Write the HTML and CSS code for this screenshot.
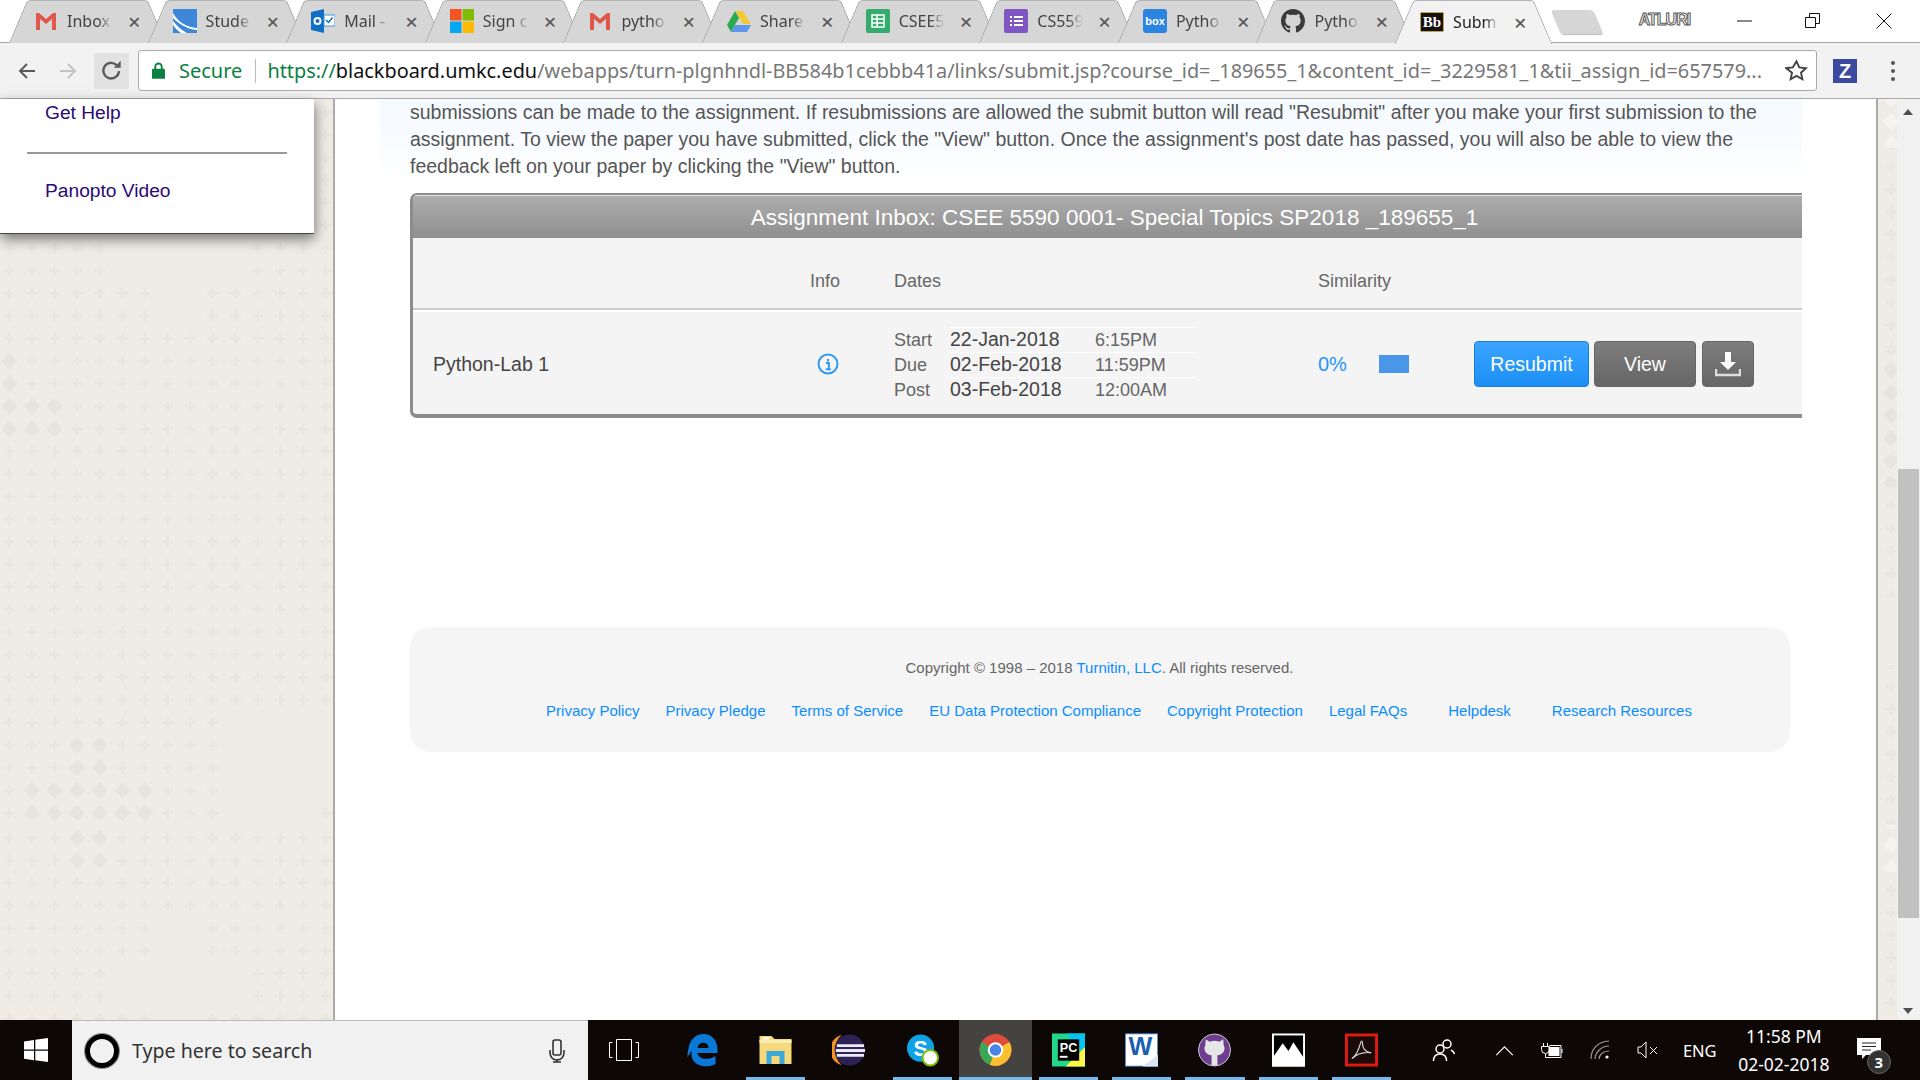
FILE: index.html
```html
<!DOCTYPE html>
<html lang="en">
<head>
  <meta charset="UTF-8">
  <title>Submit</title>
  <link rel="stylesheet" href="styles.css">
</head>
<body>
  <!-- Browser tabs -->
  <div class="tabstrip">
    <div class="tab">
      <svg class="favicon" viewBox="0 0 24 24"><path d="M2 4h3l7 6 7-6h3v17h-4V10l-6 5-6-5v11H2z" fill="#e0584c"/></svg>
      <span class="tab-title">Inbox</span><span class="tab-close">&times;</span>
    </div>
    <div class="tab">
      <svg class="favicon" viewBox="0 0 24 24"><rect x="0" y="0" width="24" height="24" fill="#3d86d8"/><path d="M0 4c5 9 13 14 24 15v2C13 20 5 14 0 9zM0 12c4 5 8 9 14 12H8C5 22 2 19 0 16z" fill="#fff"/></svg>
      <span class="tab-title">Stude</span><span class="tab-close">&times;</span>
    </div>
    <div class="tab">
      <svg class="favicon" viewBox="0 0 24 24"><path d="M0 3l13-3v24L0 21z" fill="#0f6fc6"/><rect x="13" y="6" width="11" height="11" fill="#fff" stroke="#3d97dc"/><circle cx="6.5" cy="12" r="3" fill="none" stroke="#fff" stroke-width="2"/><path d="M15 11l2.5 2.5 4-5" fill="none" stroke="#0f6fc6" stroke-width="1.5"/></svg>
      <span class="tab-title">Mail -</span><span class="tab-close">&times;</span>
    </div>
    <div class="tab">
      <svg class="favicon" viewBox="0 0 24 24"><rect width="11.5" height="11.5" fill="#f35325"/><rect x="12.5" width="11.5" height="11.5" fill="#81bc06"/><rect y="12.5" width="11.5" height="11.5" fill="#05a6f0"/><rect x="12.5" y="12.5" width="11.5" height="11.5" fill="#ffba08"/></svg>
      <span class="tab-title">Sign c</span><span class="tab-close">&times;</span>
    </div>
    <div class="tab">
      <svg class="favicon" viewBox="0 0 24 24"><path d="M2 4h3l7 6 7-6h3v17h-4V10l-6 5-6-5v11H2z" fill="#e0584c"/></svg>
      <span class="tab-title">pytho</span><span class="tab-close">&times;</span>
    </div>
    <div class="tab">
      <svg class="favicon" viewBox="0 0 24 24"><path d="M8 2h8l8 13h-8z" fill="#f5c836"/><path d="M8 2l4 7-8 14-4-7z" fill="#2da94f"/><path d="M8 16h16l-4 7H4z" fill="#5c97ec"/></svg>
      <span class="tab-title">Share</span><span class="tab-close">&times;</span>
    </div>
    <div class="tab">
      <svg class="favicon" viewBox="0 0 24 24"><rect width="24" height="24" rx="2" fill="#35ab6f"/><path d="M6 6h12v12H6zM6 10h12M6 14h12M11 6v12" fill="none" stroke="#fff" stroke-width="1.5"/></svg>
      <span class="tab-title">CSEE5</span><span class="tab-close">&times;</span>
    </div>
    <div class="tab">
      <svg class="favicon" viewBox="0 0 24 24"><rect width="24" height="24" rx="2" fill="#7e57c2"/><path d="M6 7h2v2H6zM10 7h9v2h-9zM6 11h2v2H6zM10 11h9v2h-9zM6 15h2v2H6zM10 15h9v2h-9z" fill="#fff"/></svg>
      <span class="tab-title">CS559</span><span class="tab-close">&times;</span>
    </div>
    <div class="tab">
      <svg class="favicon" viewBox="0 0 24 24"><rect width="24" height="24" rx="3" fill="#2b84e0"/><text x="12" y="16" class="box-text">box</text></svg>
      <span class="tab-title">Pytho</span><span class="tab-close">&times;</span>
    </div>
    <div class="tab">
      <svg class="favicon" viewBox="0 0 16 16"><path fill="#3b3b3b" d="M8 0C3.58 0 0 3.58 0 8c0 3.54 2.29 6.53 5.47 7.59.4.07.55-.17.55-.38 0-.19-.01-.82-.01-1.49-2.01.37-2.53-.49-2.69-.94-.09-.23-.48-.94-.82-1.13-.28-.15-.68-.52-.01-.53.63-.01 1.08.58 1.23.82.72 1.21 1.87.87 2.33.66.07-.52.28-.87.51-1.07-1.78-.2-3.64-.89-3.64-3.95 0-.87.31-1.59.82-2.15-.08-.2-.36-1.02.08-2.12 0 0 .67-.21 2.2.82.64-.18 1.32-.27 2-.27.68 0 1.36.09 2 .27 1.53-1.04 2.2-.82 2.2-.82.44 1.1.16 1.92.08 2.12.51.56.82 1.27.82 2.15 0 3.07-1.87 3.75-3.65 3.95.29.25.54.73.54 1.48 0 1.07-.01 1.93-.01 2.2 0 .21.15.46.55.38A8.013 8.013 0 0016 8c0-4.42-3.58-8-8-8z"/></svg>
      <span class="tab-title">Pytho</span><span class="tab-close">&times;</span>
    </div>
    <div class="tab tab-active">
      <svg class="favicon" viewBox="0 0 24 24"><rect x="0.5" y="2.5" width="23" height="19" rx="1" fill="#111" stroke="#c8a24a"/><text x="12" y="17" class="bb-text">Bb</text></svg>
      <span class="tab-title">Subm</span><span class="tab-close">&times;</span>
    </div>
    <div class="newtab"></div>
    <div class="window-controls">
      <span class="profile-name">ATLURI</span>
      <svg class="win-btn win-min" viewBox="0 0 16 16"><path d="M0 8h15" stroke="#111" fill="none"/></svg>
      <svg class="win-btn win-max" viewBox="0 0 16 16"><path d="M.5 4.5h10v10H.5zM4.5 4.5v-4h10v10h-4" stroke="#111" fill="none"/></svg>
      <svg class="win-btn win-close" viewBox="0 0 16 16"><path d="M.5.5l15 15M15.5.5l-15 15" stroke="#111" fill="none"/></svg>
    </div>
  </div>

  <!-- Address bar -->
  <div class="toolbar">
    <svg class="nav-icon nav-back" viewBox="0 0 20 20"><path d="M18 10H3M10 3l-7 7 7 7" fill="none" stroke="#5a5a5a" stroke-width="2"/></svg>
    <svg class="nav-icon nav-forward" viewBox="0 0 20 20"><path d="M2 10h15M10 3l7 7-7 7" fill="none" stroke="#c4c4c4" stroke-width="2"/></svg>
    <div class="reload">
      <svg class="reload-icon" viewBox="0 0 20 20"><path d="M16.5 10.5a6.8 6.8 0 1 1-2-5.2" fill="none" stroke="#5a5a5a" stroke-width="2"/><path d="M12 7.5h6v-6z" fill="#5a5a5a"/></svg>
    </div>
    <div class="omnibox">
      <svg class="lock" viewBox="0 0 14 18"><path d="M3.5 8V5a3.5 3.5 0 0 1 7 0v3" fill="none" stroke="#0b8043" stroke-width="2"/><rect y="7" width="14" height="11" rx="1" fill="#0b8043"/></svg>
      <span class="secure">Secure</span>
      <span class="omni-sep"></span>
      <span class="url"><span class="url-scheme">https://</span><span class="url-host">blackboard.umkc.edu</span>/webapps/turn-plgnhndl-BB584b1cebbb41a/links/submit.jsp?course_id=_189655_1&amp;content_id=_3229581_1&amp;tii_assign_id=657579...</span>
      <svg class="star" viewBox="0 0 24 24"><path d="M12 2.5l2.9 6.3 6.9.8-5.1 4.7 1.4 6.8-6.1-3.4-6.1 3.4 1.4-6.8L1.200 9.600l6.900-.8z" fill="none" stroke="#444" stroke-width="2"/></svg>
    </div>
    <span class="ext-z">Z</span>
    <span class="menu-dots"><i></i><i></i><i></i></span>
  </div>

  <div class="page">
    <div class="side">
      <svg class="pattern" viewBox="0 99 333 921">
        <defs>
          <pattern id="pa" x="-2" y="236.700" width="22.600" height="22.600" patternUnits="userSpaceOnUse">
            <path class="plus" d="M9.800 6h3v3.800h3.800v3h-3.800v3.800h-3v-3.800H6v-3h3.800z"/>
          </pattern>
          <pattern id="pb" x="-2" y="826.700" width="22.600" height="22.600" patternUnits="userSpaceOnUse">
            <path class="plus" d="M9.800 6h3v3.800h3.800v3h-3.800v3.800h-3v-3.800H6v-3h3.800z"/>
          </pattern>
          <pattern id="da" x="-2" y="236.700" width="22.600" height="22.600" patternUnits="userSpaceOnUse">
            <path class="dia" d="M11.300 3l8.300 8.300-8.300 8.300L3 11.300z"/>
          </pattern>
          <pattern id="db" x="-2" y="826.700" width="22.600" height="22.600" patternUnits="userSpaceOnUse">
            <path class="dia" d="M11.300 3l8.300 8.300-8.300 8.300L3 11.300z"/>
          </pattern>
        </defs>
        <rect x="0" y="99" width="333" height="728" fill="url(#pa)"/>
        <rect x="0" y="827" width="333" height="193" fill="url(#pb)"/>
        <!-- gaps in the wallpaper -->
        <g class="gap">
          <rect x="110" y="237" width="136" height="46"/>
          <rect x="155" y="283" width="46" height="45"/>
          <rect x="223" y="710" width="110" height="90"/>
          <rect x="223" y="800" width="90" height="22"/>
          <rect x="155" y="916" width="46" height="45"/>
          <rect x="110" y="961" width="136" height="46"/>
          <rect x="155" y="1007" width="46" height="13"/>
        </g>
        <rect x="66" y="733" width="45" height="45" fill="url(#da)"/>
        <rect x="21" y="778" width="135" height="45" fill="url(#da)"/>
        <rect x="66" y="827" width="45" height="45" fill="url(#db)"/>
        <rect x="0" y="350" width="21" height="45" fill="url(#da)"/>
        <rect x="0" y="395" width="66" height="45" fill="url(#da)"/>
      </svg>
      <nav class="menu">
        <a class="menu-link" href="#">Get Help</a>
        <hr class="menu-rule">
        <a class="menu-link" href="#">Panopto Video</a>
      </nav>
    </div>

    <main class="main">
      <p class="notice">submissions can be made to the assignment. If resubmissions are allowed the submit button will read "Resubmit" after you make your first submission to the assignment. To view the paper you have submitted, click the "View" button. Once the assignment's post date has passed, you will also be able to view the feedback left on your paper by clicking the "View" button.</p>

      <section class="card">
        <h2 class="card-title">Assignment Inbox: CSEE 5590 0001- Special Topics SP2018 _189655_1</h2>
        <div class="grid col-heads">
          <span></span>
          <span>Info</span>
          <span>Dates</span>
          <span>Similarity</span>
          <span></span>
        </div>
        <div class="grid paper-row">
          <span class="paper-name">Python-Lab 1</span>
          <svg class="info-icon" viewBox="0 0 22 22"><circle cx="11" cy="11" r="9.500" fill="none" stroke="#2e9bf0" stroke-width="2"/><path d="M11 6v2.400M9 10h2.800v6M8.800 16.200h5" fill="none" stroke="#2e9bf0" stroke-width="2"/></svg>
          <div class="dates">
            <span class="date-label">Start</span><span class="date-val">22-Jan-2018</span><span class="date-time">6:15PM</span>
            <span class="date-label">Due</span><span class="date-val">02-Feb-2018</span><span class="date-time">11:59PM</span>
            <span class="date-label">Post</span><span class="date-val">03-Feb-2018</span><span class="date-time">12:00AM</span>
          </div>
          <div class="similarity"><span class="sim-score">0%</span><span class="sim-bar"></span></div>
          <div class="actions">
            <button class="btn btn-blue">Resubmit</button>
            <button class="btn btn-gray btn-view">View</button>
            <button class="btn btn-gray btn-dl">
              <svg viewBox="0 0 26 26" class="dl-icon"><path d="M10 1h6v10h5l-8 8-8-8h5z" fill="#fff"/><path d="M1 18v6h24v-6" fill="none" stroke="#ddd" stroke-width="2.500"/></svg>
            </button>
          </div>
        </div>
      </section>

      <footer class="foot">
        <p class="copyright">Copyright &copy; 1998 &ndash; 2018 <a href="#">Turnitin, LLC</a>. All rights reserved.</p>
        <div class="foot-links">
          <a href="#">Privacy Policy</a>
          <a href="#">Privacy Pledge</a>
          <a href="#">Terms of Service</a>
          <a href="#">EU Data Protection Compliance</a>
          <a href="#">Copyright Protection</a>
          <a href="#">Legal FAQs</a>
          <a class="foot-helpdesk" href="#">Helpdesk</a>
          <a href="#">Research Resources</a>
        </div>
      </footer>
    </main>

    <div class="strip">
      <svg class="pattern" viewBox="0 99 19 921">
        <defs>
          <pattern id="sa" x="1.700" y="-2.700" width="22.600" height="22.600" patternUnits="userSpaceOnUse">
            <path class="plus" d="M9.800 6h3v3.800h3.800v3h-3.800v3.800h-3v-3.800H6v-3h3.800z"/>
          </pattern>
          <pattern id="sd" x="1.700" y="-2.700" width="22.600" height="22.600" patternUnits="userSpaceOnUse">
            <path class="dia" d="M11.300 3l8.300 8.300-8.300 8.300L3 11.300z"/>
          </pattern>
          <pattern id="sl" x="1.700" y="-2.700" width="22.600" height="22.600" patternUnits="userSpaceOnUse">
            <path class="dia-light" d="M11.300 3l8.300 8.300-8.300 8.300L3 11.300z"/>
          </pattern>
        </defs>
        <rect y="148" width="19" height="200" fill="url(#sa)"/>
        <rect y="350" width="19" height="137" fill="url(#sd)"/>
        <rect y="487" width="19" height="110" fill="url(#sa)"/>
        <rect y="665" width="19" height="160" fill="url(#sa)"/>
        <rect y="99" width="19" height="49" fill="url(#sl)"/>
        <rect y="825" width="19" height="47" fill="url(#sl)"/>
        <rect y="872" width="19" height="148" fill="url(#sa)"/>
      </svg>
    </div>

    <div class="scrollbar">
      <span class="arrow-up"></span>
      <span class="thumb"></span>
      <span class="arrow-down"></span>
    </div>
  </div>

  <!-- Windows taskbar -->
  <div class="taskbar">
    <div class="start">
      <svg viewBox="0 0 24 24" class="start-logo"><path d="M0 3.400l10-1.400v9.500H0zM11.300 1.800L24 0v11.500H11.300zM0 12.800h10v9.400L0 20.800zM11.300 12.800H24V24l-12.700-1.800z" fill="#fff"/></svg>
    </div>
    <div class="search">
      <span class="cortana"></span>
      <span class="search-text">Type here to search</span>
      <svg class="mic" viewBox="0 0 16 24"><rect x="4" y="1" width="8" height="15" rx="2" fill="none" stroke="#333" stroke-width="1.600"/><path d="M1 11v3a7 7 0 0 0 14 0v-3M8 20v3M4 23h8" fill="none" stroke="#333" stroke-width="1.600"/></svg>
    </div>
    <svg class="taskview" viewBox="0 0 30 22"><path d="M7.500.5h15v21h-15zM3.500 3.500h-3v15h3M26.500 3.500h3v15h-3" fill="none" stroke="#fff"/></svg>

    <div class="apps">
      <div class="app">
        <svg viewBox="0 0 32 34"><path d="M2 16C3 7 9 1 17 1c8 0 14 6 14 16v3H11c1 6 10 8 18 3v8c-10 5-24 2-24-10 0-1 0-2 .5-3C4 19 3 21 1 24c0-3 0-5 1-8zm9-1h11c0-7-10-7-11 0z" fill="#0a78d7"/></svg>
      </div>
      <div class="app app-open">
        <svg viewBox="0 0 32 34"><path d="M0 3h12l3 3h17v25H0z" fill="#f5d97a"/><rect y="7" width="32" height="3" fill="#fbeeb5"/><rect x="3" y="4.500" width="7" height="2" fill="#fff"/><path d="M7 31V18h18v13h-5v-8h-8v8z" fill="#3ba9dc"/></svg>
      </div>
      <div class="app">
        <svg viewBox="0 0 34 34"><circle cx="18" cy="17" r="16" fill="#2c2255"/><path d="M10 1.500A16 16 0 0 0 10 32.500 20 20 0 0 1 10 1.500z" fill="#f7941e"/><path d="M5 11h28v3H5zM4 16h30v3H4zM5 21h28v3H5z" fill="#ece9f5"/></svg>
      </div>
      <div class="app app-open">
        <svg viewBox="0 0 34 34"><circle cx="15" cy="15" r="14" fill="#0fa3e6"/><text x="15" y="23" class="skype-text">S</text><circle cx="25" cy="25" r="8" fill="#fff" stroke="#7fba00" stroke-width="2"/></svg>
      </div>
      <div class="app app-active">
        <svg viewBox="0 0 34 34"><circle cx="17" cy="17" r="16.500" fill="#dd4b3e"/><path d="M17 17L31.300 8.800A16.500 16.500 0 0 1 11 32.300z" fill="#fbc02d"/><path d="M17 17l-6 15.300A16.500 16.500 0 0 1 2.800 8.800z" fill="#3aa757"/><circle cx="17" cy="17" r="8" fill="#fff"/><circle cx="17" cy="17" r="6" fill="#4a86e8"/></svg>
      </div>
      <div class="app app-open">
        <svg viewBox="0 0 34 34"><rect width="34" height="34" fill="#21d789"/><path d="M14 0h20v20z" fill="#07c3f2"/><path d="M34 14v20H14z" fill="#fcf84a"/><rect x="6" y="6" width="22" height="22" fill="#000"/><text x="8" y="19" class="pc-text">PC</text><rect x="8" y="23" width="8" height="2" fill="#fff"/></svg>
      </div>
      <div class="app app-open">
        <svg viewBox="0 0 34 34"><rect width="34" height="34" fill="#fff" stroke="#2f5ea8" stroke-width="1.500"/><path d="M18 34l16-12v12z" fill="#dbe6f5"/><text x="16" y="22" class="word-text">W</text></svg>
      </div>
      <div class="app app-open">
        <svg viewBox="0 0 34 34"><ellipse cx="17" cy="17" rx="16.500" ry="16.500" fill="#6e3d92" stroke="#cfcfcf"/><path d="M8 6l4 2.500a12 12 0 0 1 10 0L26 6l.5 6c2.500 5-1 10-6.500 10.500V33h-6V22.500C8.500 22 5 17 7.500 12z" fill="#e6e6e6"/></svg>
      </div>
      <div class="app app-open">
        <svg viewBox="0 0 34 34"><rect x="1" y="1" width="32" height="32" fill="#000" stroke="#fff" stroke-width="2"/><path d="M0 26l11-16 6 8 5-9 12 18v7H0z" fill="#fff"/></svg>
      </div>
      <div class="app app-open">
        <svg viewBox="0 0 34 34"><rect x="1.500" y="1.500" width="31" height="31" fill="#1c0a08" stroke="#e01a10" stroke-width="3"/><path d="M8 25c3-2 6-8 8-15 .5-3 2-3 2 0 0 5 3 9 9 10-4-1-12 0-16 3s-4 3-3 2z" fill="none" stroke="#d9d9d9" stroke-width="1.200"/></svg>
      </div>
    </div>

    <div class="tray">
      <svg class="tray-people" viewBox="0 0 24 24"><circle cx="15" cy="6" r="4" fill="none" stroke="#fff" stroke-width="1.500"/><path d="M19 12c2 1 3 2 3.500 4" fill="none" stroke="#fff" stroke-width="1.500"/><circle cx="8" cy="11" r="4" fill="none" stroke="#fff" stroke-width="1.500"/><path d="M1.500 23c0-4 2-7 6.500-7s6.500 3 6.500 7" fill="none" stroke="#fff" stroke-width="1.500"/></svg>
      <svg class="tray-caret" viewBox="0 0 20 12"><path d="M1 11l9-9 9 9" fill="none" stroke="#fff" stroke-width="1.200"/></svg>
      <svg class="tray-battery" viewBox="0 0 24 16"><path d="M5 4.500V1M9 4.500V1M3 4.500h8v3a4 4 0 0 1-8 0z" fill="none" stroke="#fff"/><path d="M7 12v3.500h15.500v-12H11" fill="none" stroke="#fff"/><rect x="10" y="5" width="11" height="9" fill="#fff"/><rect x="23" y="7" width="1" height="4" fill="#fff"/></svg>
      <svg class="tray-wifi" viewBox="0 0 20 20"><path d="M1 19C1 9 8 1.500 19 1M5 19c0-6 6-13 14-13M9 19c0-4 4-8 10-8" fill="none" stroke="#999" stroke-width="1.200"/><circle cx="17" cy="17" r="1.600" fill="#fff"/></svg>
      <svg class="tray-volume" viewBox="0 0 22 20"><path d="M1 7h3l5-5v16l-5-5H1z" fill="none" stroke="#fff"/><path d="M13 7l7 7M20 7l-7 7" stroke="#fff" fill="none"/></svg>
      <span class="tray-lang">ENG</span>
      <div class="clock"><span>11:58 PM</span><span>02-02-2018</span></div>
      <div class="notify">
        <svg viewBox="0 0 26 24" class="notify-icon"><path d="M0 0h24v17H9l-4 4v-4H0z" fill="#fff"/><path d="M5 5h14M5 8.500h14M5 12h9" stroke="#222" fill="none"/></svg>
        <span class="notify-badge">3</span>
      </div>
    </div>
  </div>
</body>
</html>
```
FILE: styles.css
```css
* {
  margin: 0;
  padding: 0;
  box-sizing: border-box;
}

body {
  width: 1920px;
  height: 1080px;
  overflow: hidden;
  display: flex;
  flex-direction: column;
  background-color: #fff;
  font-family: "Liberation Sans", Arial, sans-serif;
  color: #555;
}

a {
  text-decoration: none;
}

/* Tabs */
.tabstrip {
  height: 43px;
  flex: none;
  display: flex;
  position: relative;
  padding-left: 9px;
  background-color: #fff;
  border-bottom: 1px solid #a9a9a9;
  font-family: "Noto Sans", sans-serif;
}

.tab {
  width: 157px;
  height: 42px;
  flex: none;
  margin-right: -18.400px;
  position: relative;
  display: flex;
  align-items: center;
  padding-left: 25px;
}

.tab::before,
.tab::after {
  content: "";
  position: absolute;
  top: 0;
  height: 42px;
  width: 90px;
  background-color: #d6d6d6;
  border-top: 1px solid #b4b4b4;
  z-index: 0;
}

.tab::before {
  left: 9px;
  transform: skewX(-23deg);
  border-left: 1px solid #a0a0a0;
  border-radius: 4px 0 0 0;
}

.tab::after {
  right: 9px;
  transform: skewX(23deg);
  border-right: 1px solid #a0a0a0;
  border-radius: 0 4px 0 0;
}

.tab-active {
  z-index: 3;
  height: 43px;
}

.tab-active::before,
.tab-active::after {
  background-color: #f2f2f2;
  height: 43px;
}

.favicon {
  width: 24px;
  height: 24px;
  flex: none;
  position: relative;
  z-index: 1;
}

.tab-title {
  width: 52px;
  margin-left: 9px;
  position: relative;
  z-index: 1;
  white-space: nowrap;
  font-size: 16px;
  color: #444;
  -webkit-mask-image: linear-gradient(to right, #000 60%, transparent 88%);
  mask-image: linear-gradient(to right, #000 60%, transparent 88%);
}

.tab-active .tab-title {
  color: #222;
}

.tab-close {
  margin-left: 9px;
  position: relative;
  z-index: 1;
  font-size: 22px;
  line-height: 1;
  font-weight: 500;
  color: #5a5a5a;
}

.box-text {
  font-family: "Liberation Sans", sans-serif;
  font-size: 11px;
  font-weight: bold;
  fill: #fff;
  text-anchor: middle;
}

.bb-text {
  font-family: "Liberation Serif", serif;
  font-size: 15px;
  font-weight: bold;
  fill: #fff;
  text-anchor: middle;
}

.newtab {
  width: 42px;
  height: 24px;
  margin: 10px 0 0 22px;
  background-color: #d6d6d6;
  border-radius: 3px;
  transform: skewX(23deg);
  box-shadow: 0 1px 1px #bbb;
  flex: none;
}

.window-controls {
  flex: 1;
  display: flex;
  align-items: center;
  height: 42px;
}

.profile-name {
  margin: -3px 0 0 41px;
  font-family: "Liberation Sans", sans-serif;
  font-size: 16px;
  font-weight: bold;
  letter-spacing: -1px;
  color: #fff;
  -webkit-text-stroke: 1px #555;
}

.win-btn {
  width: 16px;
  height: 16px;
  flex: none;
}

.win-min {
  margin-left: 47px;
}

.win-max {
  margin-left: 52px;
}

.win-close {
  margin-left: 55px;
}

/* Address bar */
.toolbar {
  height: 56px;
  flex: none;
  display: flex;
  align-items: center;
  background-color: #f2f2f2;
  border-bottom: 1px solid #aaa;
  padding-left: 17px;
}

.nav-icon {
  width: 20px;
  height: 20px;
  flex: none;
}

.nav-forward {
  margin-left: 21px;
}

.reload {
  width: 35px;
  height: 36px;
  margin-left: 16px;
  display: flex;
  align-items: center;
  justify-content: center;
  background-color: #e2e2e2;
  border-radius: 2px;
}

.reload-icon {
  width: 23px;
  height: 23px;
}

.omnibox {
  width: 1679px;
  height: 41px;
  margin-left: 9px;
  display: flex;
  align-items: center;
  background-color: #fff;
  border: 1px solid #aaa;
  border-radius: 3px;
  font-family: "Noto Sans", sans-serif;
  font-size: 20px;
  white-space: nowrap;
  padding-left: 13px;
}

.lock {
  width: 13px;
  height: 17px;
  flex: none;
}

.secure {
  margin-left: 14px;
  color: #0b8043;
}

.omni-sep {
  width: 1px;
  height: 24px;
  margin: 0 11px 0 13px;
  background-color: #bbb;
}

.url {
  flex: 1;
  color: #777;
  font-size: 19.880px;
  overflow: hidden;
}

.url-scheme {
  color: #0b8043;
}

.url-host {
  color: #111;
}

.star {
  width: 23px;
  height: 23px;
  flex: none;
  margin-right: 8px;
}

.ext-z {
  width: 24px;
  height: 24px;
  margin-left: 16px;
  flex: none;
  background-color: #3b4a9f;
  color: #fff;
  font-weight: bold;
  font-size: 20px;
  line-height: 24px;
  text-align: center;
}

.menu-dots {
  margin-left: 34px;
  display: flex;
  flex-direction: column;
  gap: 4px;
}

.menu-dots i {
  width: 4px;
  height: 4px;
  border-radius: 50%;
  background-color: #555;
}

/* Page area */
.page {
  flex: 1;
  display: flex;
  min-height: 0;
}

.side {
  width: 335px;
  flex: none;
  position: relative;
  background-color: #efece5;
  border-right: 2px solid #aaa;
}

.pattern {
  position: absolute;
  top: 0;
  left: 0;
  width: 100%;
  height: 100%;
}

.plus {
  fill: #e8e6de;
}

.dia {
  fill: #e6e4db;
}

.dia-light {
  fill: #f5f3ee;
}

.gap rect {
  fill: #efece5;
}

.menu {
  width: 314px;
  height: 135px;
  position: relative;
  background-color: #fff;
  border-bottom: 1px solid #444;
  box-shadow: 1px 5px 12px rgba(0, 0, 0, 0.5);
  padding-left: 27px;
}

.menu-link {
  display: block;
  margin-left: 18px;
  font-size: 19.200px;
  line-height: 28px;
  color: #2b0a73;
}

.menu-rule {
  width: 260px;
  height: 2px;
  margin: 25px 0 23px;
  border: 0;
  background-color: #999;
}

.main {
  flex: 1;
  min-width: 0;
  background-color: #fff;
  overflow: hidden;
}

.notice {
  width: 1422px;
  margin-left: 45px;
  padding: 0 12px 0 30px;
  font-size: 19.500px;
  line-height: 27px;
  color: #555;
  background: linear-gradient(to bottom, #f5faff 0%, #f8fbff 50%, #fff 100%);
}

/* Assignment card */
.card {
  width: 1392px;
  margin: 13px 0 0 75px;
  background-color: #f4f4f4;
  border: 2px solid #8c8c8c;
  border-width: 2px 0 4px 3px;
  border-radius: 7px 0 0 7px;
  overflow: hidden;
}

.card-title {
  height: 43px;
  padding-left: 14px;
  background: linear-gradient(to bottom, #adadad, #8f8f8f);
  border-top: 1px solid #e6e6e6;
  color: #fff;
  font-size: 22.500px;
  font-weight: normal;
  line-height: 44px;
  text-align: center;
}

.grid {
  display: grid;
  grid-template-columns: 377px 84px 424px 156px 1fr;
  padding-left: 20px;
  align-items: center;
}

.col-heads {
  height: 72px;
  padding-top: 16px;
  border-bottom: 2px solid #ccc;
  font-size: 18px;
  color: #666;
}

.paper-row {
  height: 104px;
  padding-top: 2px;
  border-top: 2px solid #fff;
}

.paper-name {
  font-size: 19.500px;
  color: #444;
}

.info-icon {
  width: 22px;
  height: 22px;
  margin-left: 7px;
}

.dates {
  display: grid;
  grid-template-columns: 56px 145px 100px;
  grid-auto-rows: 25px;
  width: 301px;
  font-size: 18px;
  line-height: 24px;
}

.date-label {
  padding-top: 1px;
  color: #666;
}

.date-val {
  font-size: 19.500px;
  line-height: 22px;
  color: #444;
  border-top: 1px solid #fff;
}

.date-time {
  color: #666;
  border-top: 1px solid #fff;
}

.similarity {
  display: flex;
  align-items: center;
}

.sim-score {
  width: 61px;
  font-size: 20px;
  color: #1e96ff;
}

.sim-bar {
  width: 30px;
  height: 18px;
  background-color: #4a97ea;
}

.actions {
  display: flex;
  gap: 5px;
}

.btn {
  height: 46px;
  border: 1px solid #666;
  border-radius: 4px;
  color: #fff;
  font-family: inherit;
  font-size: 19.500px;
}

.btn-blue {
  width: 115px;
  border-color: #1b7fd1;
  background: linear-gradient(to bottom, #3ba5ff, #1c8ef5);
}

.btn-gray {
  background: linear-gradient(to bottom, #7d7d7d, #666);
}

.btn-view {
  width: 102px;
}

.btn-dl {
  width: 52px;
  margin-left: 1px;
  display: flex;
  align-items: center;
  justify-content: center;
}

.dl-icon {
  width: 26px;
  height: 26px;
}

/* Footer */
.foot {
  width: 1380px;
  height: 125px;
  margin: 209px 0 0 75px;
  background-color: #f5f5f5;
  border-radius: 20px;
  font-size: 15px;
  text-align: center;
  color: #666;
  padding-top: 32px;
}

.foot a {
  color: #0a8dff;
}

.copyright {
  line-height: 18px;
  margin-left: -1px;
}

.foot-links {
  display: flex;
  justify-content: center;
  gap: 26px;
  margin-top: 25px;
  padding-left: 38px;
  line-height: 18px;
}

.foot-helpdesk {
  margin: 0 15px;
}

.strip {
  width: 21px;
  flex: none;
  position: relative;
  background-color: #efece5;
  border-left: 2px solid #aaa;
}

.scrollbar {
  width: 23px;
  flex: none;
  position: relative;
  background-color: #f1f1f1;
}

.arrow-up,
.arrow-down {
  position: absolute;
  left: 6px;
  width: 0;
  height: 0;
  border-left: 5.500px solid transparent;
  border-right: 5.500px solid transparent;
}

.arrow-up {
  top: 10px;
  border-bottom: 6px solid #505050;
}

.arrow-down {
  bottom: 6px;
  border-top: 6px solid #505050;
}

.thumb {
  position: absolute;
  top: 370px;
  left: 1px;
  width: 21px;
  height: 449px;
  background-color: #c1c1c1;
}

/* Taskbar */
.taskbar {
  height: 60px;
  flex: none;
  display: flex;
  align-items: center;
  background-color: #0d0705;
  color: #fff;
}

.start {
  width: 72px;
  display: flex;
  justify-content: center;
}

.start-logo {
  width: 24px;
  height: 24px;
}

.search {
  width: 516px;
  height: 60px;
  flex: none;
  display: flex;
  align-items: center;
  padding-left: 13px;
  background-color: #f1f1f1;
  border-top: 1px solid #bbb;
  color: #333;
  font-family: "Noto Sans", sans-serif;
}

.cortana {
  width: 34px;
  height: 34px;
  flex: none;
  border: 5px solid #000;
  border-radius: 50%;
  box-shadow: 0 0 0 1px #888;
}

.search-text {
  margin-left: 13px;
  font-size: 19.600px;
  width: 417px;
}

.mic {
  width: 16px;
  height: 24px;
  flex: none;
}

.taskview {
  width: 30px;
  height: 22px;
  margin-left: 21px;
  flex: none;
}

.apps {
  display: flex;
  margin-left: 27px;
  flex: none;
}

.app {
  width: 73.200px;
  height: 60px;
  position: relative;
  display: flex;
  align-items: center;
  justify-content: center;
}

.app svg {
  width: 33px;
  height: 34px;
}

.app-open::after,
.app-active::after {
  content: "";
  position: absolute;
  left: 7px;
  right: 7px;
  bottom: 0;
  height: 3px;
  background-color: #76b9ed;
}

.app-active {
  background-color: #45433f;
}

.app-active::after {
  left: 0;
  right: 0;
}

.skype-text,
.word-text,
.pc-text {
  font-family: "Liberation Sans", sans-serif;
  font-weight: bold;
}

.skype-text {
  font-size: 22px;
  fill: #fff;
  text-anchor: middle;
}

.word-text {
  font-size: 26px;
  fill: #1a5fb4;
  text-anchor: middle;
}

.pc-text {
  font-size: 13px;
  fill: #fff;
}

.tray {
  display: flex;
  align-items: center;
  margin-left: 34px;
  flex: none;
  font-family: "Noto Sans", sans-serif;
}

.tray-people {
  width: 24px;
  height: 24px;
  flex: none;
}

.tray-caret {
  width: 19px;
  height: 11px;
  margin-left: 39px;
  flex: none;
}

.tray-battery {
  width: 25px;
  height: 16px;
  margin-left: 24px;
  flex: none;
}

.tray-wifi {
  width: 20px;
  height: 20px;
  margin-left: 27px;
  flex: none;
}

.tray-volume {
  width: 22px;
  height: 20px;
  margin-left: 27px;
  flex: none;
}

.tray-lang {
  margin-left: 24px;
  font-size: 16.500px;
  width: 54px;
  flex: none;
}

.clock {
  width: 94px;
  display: flex;
  flex-direction: column;
  align-items: center;
  gap: 4px;
  font-size: 17.500px;
  line-height: 24px;
  flex: none;
}

.notify {
  position: relative;
  margin-left: 26px;
  width: 24px;
  height: 24px;
  flex: none;
}

.notify-icon {
  width: 26px;
  height: 24px;
}

.notify-badge {
  position: absolute;
  top: 12px;
  left: 10px;
  width: 24px;
  height: 24px;
  border-radius: 50%;
  background-color: #333;
  border: 1px solid #666;
  font-size: 15px;
  font-weight: bold;
  line-height: 22px;
  text-align: center;
}
```
